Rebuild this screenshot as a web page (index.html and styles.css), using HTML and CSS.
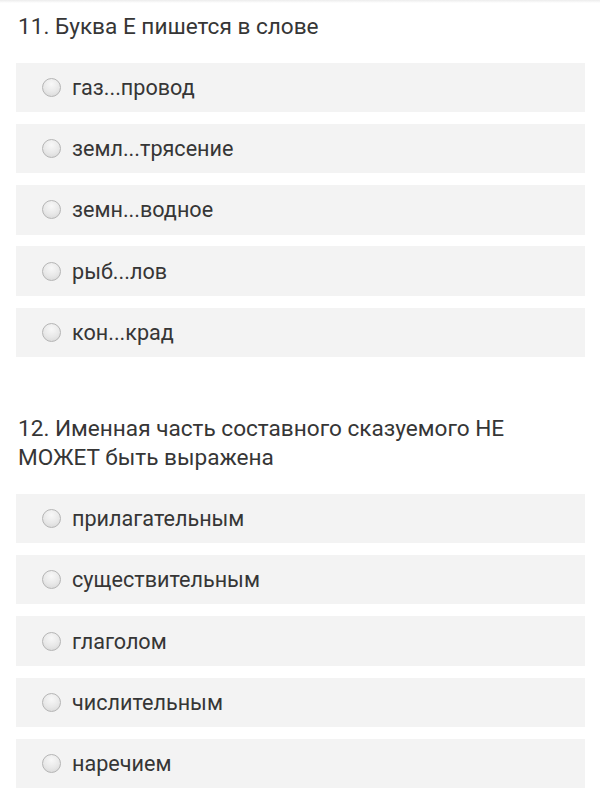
FILE: index.html
```html
<!DOCTYPE html>
<html lang="ru">
<head>
<meta charset="utf-8">
<link rel="stylesheet" href="styles.css">
</head>
<body>
<div class="topline"></div>
<main class="quiz">
  <section class="question">
    <h2 class="q-title">11. Буква Е пишется в слове</h2>
    <div class="options">
      <label class="option"><span class="radio"></span><span class="opt-text">газ...провод</span></label>
      <label class="option"><span class="radio"></span><span class="opt-text">земл...трясение</span></label>
      <label class="option"><span class="radio"></span><span class="opt-text">земн...водное</span></label>
      <label class="option"><span class="radio"></span><span class="opt-text">рыб...лов</span></label>
      <label class="option"><span class="radio"></span><span class="opt-text">кон...крад</span></label>
    </div>
  </section>
  <section class="question">
    <h2 class="q-title">12. Именная часть составного сказуемого НЕ МОЖЕТ быть выражена</h2>
    <div class="options">
      <label class="option"><span class="radio"></span><span class="opt-text">прилагательным</span></label>
      <label class="option"><span class="radio"></span><span class="opt-text">существительным</span></label>
      <label class="option"><span class="radio"></span><span class="opt-text">глаголом</span></label>
      <label class="option"><span class="radio"></span><span class="opt-text">числительным</span></label>
      <label class="option"><span class="radio"></span><span class="opt-text">наречием</span></label>
    </div>
  </section>
</main>
</body>
</html>
```
FILE: styles.css
```css
* { box-sizing: border-box; }
html, body { margin: 0; padding: 0; background: #fff; }
body {
  font-family: Roboto, "Noto Sans", "Liberation Sans", sans-serif;
  color: #363636;
  width: 600px;
}
.topline {
  height: 3px;
  background: linear-gradient(#ececec, #fff);
}
.quiz {
  padding: 9px 15px 0 16px;
  display: flex;
  flex-direction: column;
  gap: 57px;
}
.question {
  display: flex;
  flex-direction: column;
  gap: 21.5px;
}
.q-title {
  margin: 0;
  padding-left: 2px;
  padding-right: 60px;
  font-weight: 400;
  font-size: 22.6px;
  line-height: 29px;
  color: #363636;
}
.options {
  display: flex;
  flex-direction: column;
  gap: 11.8px;
}
.option {
  height: 49.5px;
  background: #f3f3f3;
  display: flex;
  align-items: center;
  padding-left: 26px;
  gap: 11px;
}
.radio {
  width: 19px;
  height: 19px;
  border-radius: 50%;
  border: 1px solid #b5b5b5;
  background: radial-gradient(circle at 50% 30%, #f8f8f8 0%, #e8e8e8 55%, #d4d4d4 100%);
  flex: none;
}
.opt-text {
  font-size: 21.6px;
  color: #363636;
}
```
